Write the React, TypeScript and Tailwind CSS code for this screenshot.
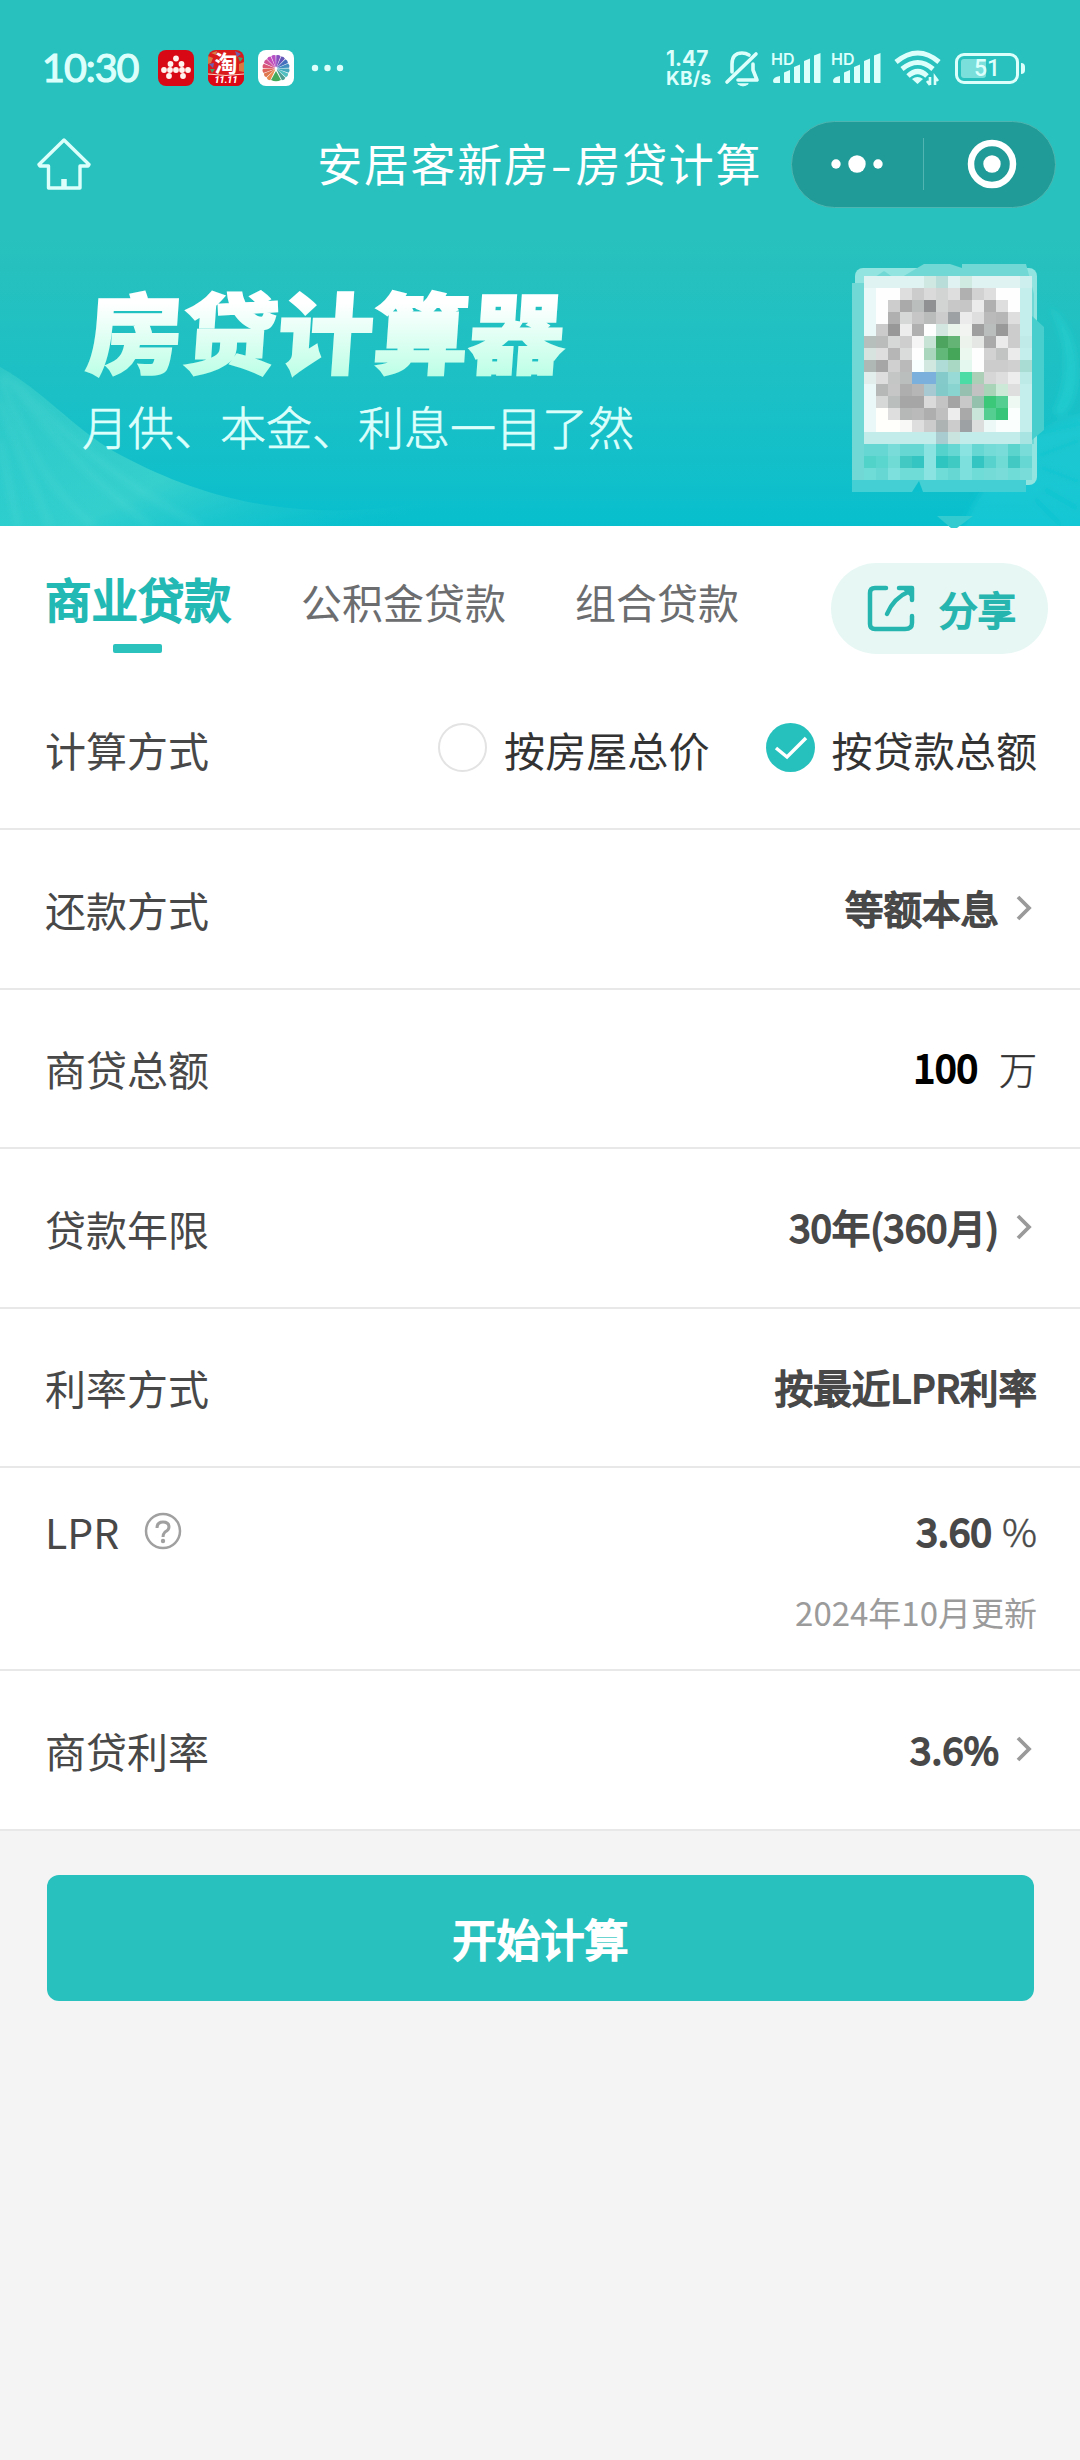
import clsx from "clsx";
import type { ReactNode } from "react";

type Row = {
  label: string;
  value: string;
  arrow?: boolean;
};

const firstRow: Row = { label: "还款方式", value: "等额本息", arrow: true };

const termRows: Row[] = [
  { label: "贷款年限", value: "30年(360月)", arrow: true },
  { label: "利率方式", value: "按最近LPR利率" },
];

// 12px cells of the pixelated code
const W = "#fefefe";
const codeCells: string[][] = [
  ["#dff3f3", "#dff3f3", "#dff3f3", "#dff3f3", "#dff3f3", "#cfe9e2", "#b9ddd8", "#e0f2f2", "#cfeae0", "#e0f3f3", "#dff3f3", "#dff3f3", "#dff3f3", "#cdf0ee"],
  ["#eaf8f7", W, W, "#dedede", "#cccccc", "#dadada", "#d2d4d3", "#dedede", "#b0b0b0", "#d2d2d2", "#dedede", W, W, "#c4eeec"],
  ["#eaf8f7", W, "#cdcdcd", "#aaaaaa", "#babebc", "#8f9193", "#d2d4d3", "#c8c8c8", "#c6c6c6", "#ebebeb", "#b0b0b0", "#dedede", W, "#c4eeec"],
  ["#eaf8f7", W, "#b0b0b0", "#d6d8d7", "#c6c6c6", "#babcbb", "#cccccc", "#9ea1a3", "#ebebeb", "#dedede", "#bababa", "#b6b6b6", "#dedede", "#c4eeec"],
  ["#eaf8f7", "#cbcbcb", "#989898", "#ededed", "#b0b0b0", W, "#d3e6e0", "#ebf4ea", "#f2f4f2", "#9f9f9f", "#babebc", "#999999", "#cccccc", "#c4eeec"],
  ["#b7bfbc", "#babcbb", "#d6d8d7", "#cecece", "#f5f5f5", "#c6e3d5", "#4ca45f", "#64b475", "#ebf3ec", "#e5e7e5", "#aaaaaa", "#ebebeb", "#cccccc", "#c0eae8"],
  ["#d6e3de", "#dedede", "#b6b6b6", "#dadcdb", W, "#a9d6bd", "#62b878", "#45a659", "#ebf8f0", W, "#d2d2d2", "#c2c4c3", "#ebebeb", "#c4eeec"],
  ["#b0b8b5", "#a6a6a6", "#d0d0d0", "#bababa", "#f8ffff", "#d1e8e0", "#b0dcd8", "#a9d8c4", "#e5f8ef", W, "#cccccc", "#cccccc", "#d0d0d0", "#a9dcd3"],
  ["#e2eeec", "#dedede", "#c4c6c5", "#babebc", "#7bafdc", "#7bb0dc", "#85caca", "#98dbd6", "#4bdca5", "#acd0b7", "#d6d6d6", "#dedede", "#ededed", "#bde9e7"],
  ["#eaf8f7", "#b6b8b7", "#c6c6c6", "#aeaeae", "#b6b6b6", "#a6c9d2", "#82c9ca", "#89d4d0", "#98c0b0", "#c2c2c2", "#a9d4b8", "#cce9d8", "#dedede", "#c4eeec"],
  ["#eaf8f7", "#d6d8d7", "#babebc", "#a6a6a6", "#a6a6a6", "#dadada", "#c4c4c4", "#a4a4a4", "#c8c8c8", "#93c1ae", "#3cc879", "#55cf91", "#eef9f3", "#c4eeec"],
  ["#eaf8f7", "#fffffb", "#dedede", "#b6b8b7", "#bababa", "#aeaeae", "#bfbfbf", "#ededed", "#a9a9a9", "#c9e5da", "#54ce91", "#37c57a", "#fbfffd", "#c4eeec"],
  ["#eaf8f7", "#fffffb", "#fffffb", "#f8f9f6", "#dedede", "#cccccc", "#adb3b2", "#cccccc", "#9ea1a3", "#dcdedd", "#ecf9f6", "#fafffe", "#fafffe", "#c4eeec"],
  ["#c1ecea", "#c1ecea", "#c1ecea", "#c1ecea", "#c1ecea", "#c1ecea", "#a8ccd0", "#c9e3df", "#c1ecea", "#c1ecea", "#c1ecea", "#c1ecea", "#c1ecea", "#a8e5e2"],
  ["#66d7d2", "#66d7d2", "#79dcd8", "#66d7d2", "#66d7d2", "#8be3e1", "#55d2cb", "#66d7d2", "#8be3e1", "#66d7d2", "#74dbd7", "#79dcd8", "#5bd4ce", "#7adcd9"],
  ["#52d3ca", "#5bd6ce", "#70dad5", "#42c9c3", "#34c5c2", "#8be3e1", "#2ec4c0", "#3fcac4", "#7ee0dd", "#34c5c2", "#58d2cc", "#70dad5", "#42c9c3", "#66d7d2"],
  ["#70dcd8", "#66d7d2", "#7ee0dd", "#70dcd8", "#70dcd8", "#8be3e1", "#70dcd8", "#66d7d2", "#7ee0dd", "#70dcd8", "#74dbd7", "#7adcd9", "#70dcd8", "#7adcd9"],
];

const petals = [
  "#4f9f93", "#52bfc1", "#46a9bd", "#438fc0", "#446fbd", "#6556b8", "#8a4fbe",
  "#b650c4", "#c34db8", "#ce5496", "#da5674", "#df6759", "#df784f", "#e88b4f",
];

const dots = [
  [18, 8.5], [12.5, 14], [23.5, 14], [6, 20], [18, 20], [30, 20], [12, 20], [24, 20], [11, 26], [25, 26],
];

function AppIcons() {
  return (
    <div className="ml-[19px] flex gap-[14px]">
      <svg className="size-9" viewBox="0 0 36 36">
        <rect width="36" height="36" rx="8" fill="#d80914" />
        {dots.map(([x, y]) => (
          <circle key={`${x}-${y}`} cx={x} cy={y} r="2.900" fill="#fff1ee" />
        ))}
      </svg>
      <div className="relative flex size-9 flex-col items-center rounded-lg bg-[#d91b1c] text-white">
        <svg className="absolute inset-0 rounded-lg" viewBox="0 0 36 36">
          <path d="M0 6 5 8 3 13 0 14ZM3 3 9 1 8 5ZM31 14 36 12V22L31 21Z" fill="#d77b45" />
          <path d="M1 14 6 13 5 18ZM27 1 33 4 29 7Z" fill="#715fad" />
          <path d="M30 7 35 8 32 12ZM2 19 7 19 4 23Z" fill="#43a06b" />
          <path d="M0 24Q18 27 36 24V36H0Z" fill="#dc0714" />
          <path d="M0 24Q18 27 36 24" fill="none" stroke="#ffd9c8" />
        </svg>
        <span className="relative h-[25px] text-[23px] font-bold leading-[25px]">淘</span>
        <span className="relative h-[11px] font-['Roboto'] text-[9px] font-black italic leading-[11px]">11.11</span>
      </div>
      <svg className="size-9" viewBox="0 0 36 36">
        <rect width="36" height="36" rx="8" fill="#fff" />
        {petals.map((color, i) => (
          <path
            key={color}
            d="M17.800 20 15.800 31.500Q18 33 20.200 31.500L18.200 20Z"
            fill={color}
            transform={`rotate(${-36 - i * 22.2} 18 18.500)`}
          />
        ))}
        <path d="M18 21 13 30Q18 32.500 23 30Z" fill="#45a95c" />
      </svg>
    </div>
  );
}

function Signal() {
  return (
    <svg className="h-9 w-[51px]" viewBox="0 0 51 36" fill="#dcfffc">
      <text x="0" y="14.500" fontFamily="Inter" fontSize="16" fontWeight="600" textLength="23.500" lengthAdjust="spacingAndGlyphs">HD</text>
      <path d="M2 31Q2 27 9 26V33H3.500Q2 33 2 31Z" />
      <path d="M13 22.500 19 20V33H14Q13 33 13 31.500Z" />
      <path d="M23 17 29 14.500V33H24Q23 33 23 31.500Z" />
      <path d="M33 11 39 8.500V33H34Q33 33 33 31.500Z" />
      <path d="M43 5.500 49.500 3V33H44Q43 33 43 31.500Z" />
    </svg>
  );
}

function StatusBar() {
  return (
    <div className="flex h-[116px] items-start pl-[42px] pt-[50px] text-[#dcfffc]">
      <span className="mt-[-1px] w-[97px] whitespace-nowrap font-['Lato'] text-[39.500px] leading-9 tracking-[-1px] [-webkit-text-stroke:1.200px_#dcfffc]">10:30</span>
      <AppIcons />
      <svg className="ml-[17px] h-9 w-9" viewBox="0 0 36 36" fill="#dcfffc">
        <circle cx="4" cy="18" r="3.200" />
        <circle cx="16.500" cy="18" r="3.200" />
        <circle cx="29" cy="18" r="3.200" />
      </svg>
      <div className="ml-auto flex pr-[55px]">
        <div className="mt-[-2px] w-[50px] whitespace-nowrap font-['Inter'] font-bold">
          <div className="text-[21px] leading-[21px]">1.47</div>
          <div className="text-[19px] leading-[19px] tracking-[0.300px]">KB/s</div>
        </div>
        <svg className="ml-2 h-[38px] w-[37px]" viewBox="0 0 37 38" fill="none" stroke="#dcfffc" strokeWidth="3.600" strokeLinecap="round" strokeLinejoin="round">
          <path d="M8 22V14Q8 3 18 3 22 3 25 5M29 14V20L33 30H14M3 32 32 4" />
          <path d="M14 34Q19 38 24 34Z" fill="#dcfffc" strokeWidth="1" />
        </svg>
        <span className="ml-[10px]"><Signal /></span>
        <span className="ml-[9px]"><Signal /></span>
        <svg className="ml-3 h-9 w-[47px]" viewBox="0 0 47 36" fill="none" stroke="#dcfffc" strokeWidth="5">
          <path d="M2 12Q24-6 45 12M8 19Q24 6 39 19M14 26Q24 17 33 26" />
          <path d="M18 29Q23.500 25 29 29L23.500 34Z" fill="#dcfffc" stroke="none" />
          <path d="M36 27V35M33 31 36 35M41 35V27L44 31" strokeWidth="2.600" />
        </svg>
        <div className="ml-[14px] flex h-9 items-center">
          <div className="relative h-[31px] w-[64px] rounded-[9px] border-[3px] border-[#dcfffc] p-[3px]">
            <div className="h-full w-[25px] rounded-[3px] bg-[#7adfda]" />
            <span className="absolute inset-0 text-center font-['Roboto'] text-[23px] font-medium leading-[26px]">51</span>
          </div>
          <div className="ml-[2px] h-[11px] w-1 rounded-r bg-[#dcfffc]" />
        </div>
      </div>
    </div>
  );
}

function NavBar() {
  return (
    <div className="flex h-[96px] items-center pl-[37px] pr-[24px]">
      <svg className="h-[52px] w-[54px]" viewBox="0 0 54 52" fill="none" stroke="#dcfffc" strokeWidth="3.400" strokeLinejoin="round">
        <path d="M27 2 2 26.500 3 28H11.500V50H43V28H51L52 26.500Z" />
        <path d="M27 50V41" strokeWidth="5.500" />
      </svg>
      <h1 className="ml-auto mt-[-2px] flex whitespace-nowrap text-[45px] leading-[60px] tracking-[1.600px] text-white">
        安居客新房
        <span className="mx-[4px] scale-x-140">-</span>
        房贷计算
      </h1>
      <div className="ml-[29px] flex h-[87px] w-[265px] items-center rounded-full border border-[#4fb5b0] bg-[#209b97]">
        <svg className="h-10 w-[131px]" viewBox="0 0 131 40" fill="#fff">
          <circle cx="44" cy="20" r="4.700" />
          <circle cx="65" cy="20" r="8.700" />
          <circle cx="86" cy="20" r="4.700" />
        </svg>
        <div className="h-[52px] w-px bg-[#52b5b1]" />
        <svg className="h-[50px] w-[130px]" viewBox="0 0 130 50">
          <circle cx="68" cy="25" r="21" fill="none" stroke="#fff" strokeWidth="6.500" />
          <circle cx="68" cy="25" r="8.700" fill="#fff" />
        </svg>
      </div>
    </div>
  );
}

function CodeMosaic() {
  return (
    <div className="relative h-[240px] w-[196px]">
      <svg className="absolute inset-0" viewBox="0 0 196 240">
        <rect x="3" y="4" width="182" height="217" rx="8" fill="#91e4df" />
        <path d="M0 19H14L32 7 45 16 72 0H98L110 4V0H174L182 30V180H174V216H0Z" fill="#71d8d5" />
        <path d="M180 52 192 63V166L180 176Z" fill="#48cfcd" />
        <path d="M0 216H174V228H0Z" fill="#43cfd3" />
        <path d="M60 228 67 217 71 228Z" fill="#0bbfcc" />
      </svg>
      <div className="absolute left-3 top-3 grid grid-cols-[repeat(14,12px)] auto-rows-[12px]">
        {codeCells.flat().map((color, i) => (
          <div key={i} style={{ backgroundColor: color }} />
        ))}
      </div>
    </div>
  );
}

function Banner() {
  return (
    <div className="relative flex h-[314px] justify-between pl-[82px] pr-[32px]">
      <svg className="absolute inset-0" viewBox="0 0 1080 314">
        <defs>
          <linearGradient id="leftWave" x1="0" y1="0" x2="1" y2="0.600">
            <stop offset="0" stopColor="#5ce0cf" stopOpacity="0.250" />
            <stop offset="0.550" stopColor="#5ce0cf" stopOpacity="0.500" />
            <stop offset="1" stopColor="#25cbd2" stopOpacity="0" />
          </linearGradient>
          <filter id="soft">
            <feGaussianBlur stdDeviation="3" />
          </filter>
        </defs>
        <path d="M0 155C45 180 72 215 115 240 210 292 330 325 510 270V314H0Z" fill="url(#leftWave)" />
        <g fill="none" stroke="#86eadb" strokeOpacity="0.120" strokeWidth="6" filter="url(#soft)">
          <path d="M0 165C30 240 50 280 95 314M0 190 50 314M5 163C65 240 95 270 150 314M0 230 18 314M15 170C80 240 130 275 200 314" />
        </g>
        <g filter="url(#soft)">
          <path d="M1049 94C1071 110 1080 145 1077 171 1074 195 1062 213 1053 199 1071 165 1067 125 1049 94Z" fill="#28dad9" fillOpacity="0.400" />
          <path d="M960 320Q1010 210 1090 202V320Z" fill="#20d4df" fillOpacity="0.400" />
          <path d="M1038 244 1080 228M1040 255 1080 270M1042 276 1080 298M1034 286 1062 314M1040 220 1080 212" stroke="#08bbc9" strokeOpacity="0.400" strokeWidth="4" />
        </g>
      </svg>
      <div className="relative flex flex-col">
        {/* heavy display title, filled with a white to mint gradient */}
        <svg className="mt-[48px] h-[140px] w-[500px] overflow-visible" viewBox="0 0 500 140">
          <defs>
            <linearGradient id="titleFill" x1="0" y1="0" x2="0" y2="1">
              <stop offset="0.300" stopColor="#ffffff" />
              <stop offset="0.900" stopColor="#b9ffe5" />
            </linearGradient>
          </defs>
          <text
            x="10"
            y="107"
            fontSize="88"
            fontWeight="900"
            fill="url(#titleFill)"
            stroke="url(#titleFill)"
            strokeWidth="2"
            textLength="478"
            lengthAdjust="spacingAndGlyphs"
            transform="skewX(-4)"
          >
            房贷计算器
          </text>
        </svg>
        <p className="mt-[-7px] whitespace-nowrap text-[46px] font-light leading-[64px] text-[#dcfffc] [-webkit-text-stroke:0.700px_#dcfffc]">月供、本金、利息一目了然</p>
      </div>
      <div className="relative mt-[52px]">
        <CodeMosaic />
        <svg className="absolute left-[85px] top-[252px] h-3 w-9" viewBox="0 0 36 12">
          <path d="M0 0H36L20 12H14Z" fill="#33cbd0" />
        </svg>
      </div>
    </div>
  );
}

function Tabs() {
  return (
    <div className="flex h-[142px] items-start pl-[45px] pr-[32px]">
      <div className="flex flex-col items-center">
        <span className="mt-[40px] text-[46.500px] leading-[64px] text-[#22b9b4] [-webkit-text-stroke:2.200px_#22b9b4]">商业贷款</span>
        <div className="mr-[2px] mt-[14px] h-[9px] w-[49px] rounded-[2px] bg-[#2bc1bd]" />
      </div>
      <span className="ml-[70px] mt-[45px] text-[41px] leading-[60px] text-[#6b6d6f]">公积金贷款</span>
      <span className="ml-[69px] mt-[45px] text-[41px] leading-[60px] text-[#6b6d6f]">组合贷款</span>
      <button className="ml-auto mt-[37px] flex h-[91px] w-[217px] items-center rounded-full bg-[#e7f8f4] pl-[36px] text-[#27b5b0]" type="button">
        <svg className="h-[48px] w-[48px]" viewBox="0 0 48 48" fill="none" stroke="currentColor" strokeWidth="4.500" strokeLinecap="round" strokeLinejoin="round">
          <path d="M19 3H8Q3 3 3 8V39Q3 44 8 44H38Q45 44 45 38V31M32 3H45V15" />
          <path d="M20 29C24 19 31 11 43 6" />
          <path d="M37 4 44 11V4Z" fill="currentColor" strokeWidth="2" />
        </svg>
        <span className="ml-[24px] whitespace-nowrap text-[38.500px] [-webkit-text-stroke:2px_#27b5b0]">分享</span>
      </button>
    </div>
  );
}

function CellLabel({ children }: { children: ReactNode }) {
  return <span className="text-[41px] leading-[60px] text-[#484848]">{children}</span>;
}

function Chevron() {
  return (
    <svg className="ml-[16px] mr-[4px] mt-[2px] h-[28px] w-[18px]" viewBox="0 0 18 28" fill="none" stroke="#9a9a9a" strokeWidth="3.800">
      <path d="M3 3 14 14 3 25" />
    </svg>
  );
}

function FormRow({ label, value, arrow, className }: Row & { className?: string }) {
  return (
    <div className={clsx("flex items-center justify-between border-b-2 border-[#e8e8e8] pl-[45px] pr-[43px]", className ?? "h-[159.500px]")}>
      <CellLabel>{label}</CellLabel>
      <div className="flex items-center pb-[3px]">
        <span className="text-[38.500px] leading-[60px] text-[#484848] [-webkit-text-stroke:1.800px_#484848]">{value}</span>
        {arrow ? <Chevron /> : null}
      </div>
    </div>
  );
}

function MethodRow() {
  return (
    <div className="flex h-[162px] items-center justify-between border-b-2 border-[#e8e8e8] pl-[45px] pr-[43px] pt-[1px]">
      <CellLabel>计算方式</CellLabel>
      <div className="flex items-center text-[41.100px] leading-[60px] text-[#333333]">
        <span className="mb-[2px] mr-[17px] size-[49px] rounded-full border-2 border-[#e3e3e3]" />
        按房屋总价
        <svg className="mb-[2px] ml-[56px] mr-[17px] size-[49px]" viewBox="0 0 49 49">
          <circle cx="24.500" cy="24.500" r="24.500" fill="#27c1bd" />
          <path d="M10 25 21 34 40 15" fill="none" stroke="#fff" strokeWidth="3.500" />
        </svg>
        按贷款总额
      </div>
    </div>
  );
}

export default function App() {
  return (
    <main className="flex h-[2460px] w-[1080px] flex-col overflow-hidden bg-[#f4f4f4] font-['Noto_Sans_CJK_SC',sans-serif]">
      <header className="h-[526px] shrink-0 bg-linear-to-b from-[#28c1bd] from-45% to-[#07bfcd]">
        <StatusBar />
        <NavBar />
        <Banner />
      </header>

      <section className="bg-white">
        <Tabs />
        <MethodRow />
        <FormRow {...firstRow} />
        <div className="flex h-[159.500px] items-center justify-between border-b-2 border-[#e8e8e8] pl-[45px] pr-[43px]">
          <CellLabel>商贷总额</CellLabel>
          <div className="flex items-center leading-[60px]">
            <span className="pb-[4px] text-[38.700px] text-black [-webkit-text-stroke:2px_#000]">100</span>
            <span className="ml-[21px] text-[38px] font-light text-[#333333] [-webkit-text-stroke:0.500px_#333]">万</span>
          </div>
        </div>
        {termRows.map((row) => (
          <FormRow key={row.label} {...row} />
        ))}
        <div className="flex h-[203px] justify-between border-b-2 border-[#e8e8e8] pl-[45px] pr-[43px] pt-[33px]">
          <div className="flex h-[60px] items-center">
            <CellLabel>LPR</CellLabel>
            <svg className="ml-[25px] size-[38px]" viewBox="0 0 38 38" fill="none" stroke="#a0a0a0" strokeWidth="2.500">
              <circle cx="19" cy="19" r="17" />
              <path d="M13 16Q13 10 19 10 25 10 25 15 25 18 21 20 19 22 19 25" strokeWidth="3" />
              <circle cx="19" cy="29" r="2.200" fill="#a0a0a0" stroke="none" />
            </svg>
          </div>
          <div className="mt-[-1px] flex flex-col items-end">
            <div className="leading-[60px] text-[#484848]">
              <span className="text-[39px] [-webkit-text-stroke:2px_#484848]">3.60</span>
              <span className="ml-[10px] text-[39px] font-light [-webkit-text-stroke:0.500px_#484848]">%</span>
            </div>
            <span className="mt-[18px] text-[33px] leading-[48px] text-[#9b9b9b]">2024年10月更新</span>
          </div>
        </div>
        <FormRow label="商贷利率" value="3.6%" arrow />
      </section>

      <button className="ml-[47px] mr-[46px] mt-[44px] h-[126px] shrink-0 rounded-xl bg-[#28c1bd] text-[44px] text-white [-webkit-text-stroke:2.200px_#fff]" type="button">
        开始计算
      </button>
    </main>
  );
}
